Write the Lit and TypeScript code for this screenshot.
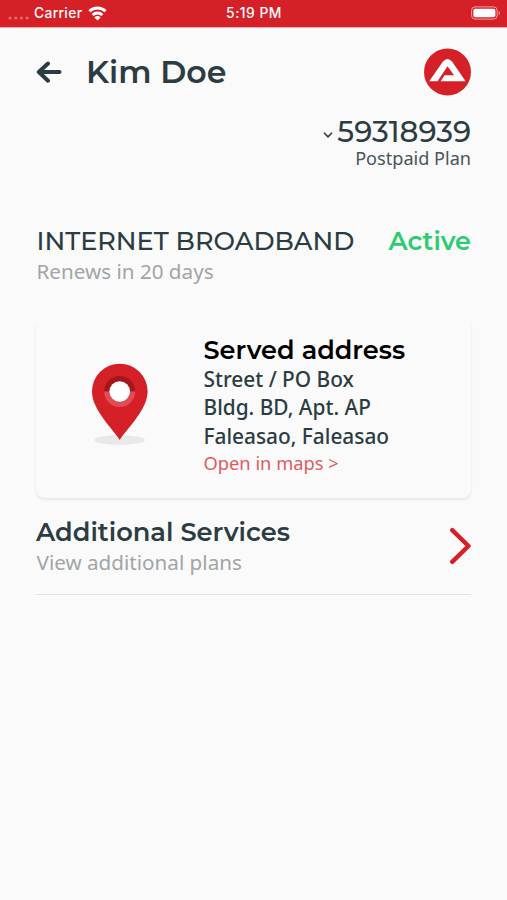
import { LitElement, html, css } from "lit";
import { customElement } from "lit/decorators.js";

@customElement("status-bar")
class StatusBar extends LitElement {
  static styles = css`
    :host { display: block; }
    .bar {
      height: 27px; background: #d62027; color: #fff;
      display: grid; grid-template-columns: 1fr auto 1fr; align-items: center;
      padding: 0 5px 0 8px; border-bottom: 1px solid #ecaaac; box-sizing: content-box;
      font: 500 13.8px/27px Inter, "Liberation Sans", sans-serif;
    }
    .left { display: flex; align-items: center; }
    .dots { margin: 8px 5px 0 0; display: block; }
    .carrier { letter-spacing: 0.35px; }
    .wifi { margin-left: 6px; display: block; }
    .time { letter-spacing: 0.5px; margin-right: 2px; }
    .battery { justify-self: end; display: block; margin-top: -1px; }
  `;
  render() {
    return html`<div class="bar">
      <div class="left">
        <svg class="dots" width="21" height="4" fill="#e4686c">
          <circle cx="2" cy="2" r="1.6" /><circle cx="7.7" cy="2" r="1.6" />
          <circle cx="13.4" cy="2" r="1.6" /><circle cx="19.1" cy="2" r="1.6" />
        </svg>
        <span class="carrier">Carrier</span>
        <svg class="wifi" width="19" height="15" viewBox="0 0 19 15" fill="none" stroke="#fff" stroke-width="2.8">
          <path d="M1.4 5.3a11.6 11.6 0 0 1 16.2 0" />
          <path d="M4.6 9a7 7 0 0 1 9.8 0" />
          <path d="M9.5 14.4 6.4 11.4a4.4 4.4 0 0 1 6.2 0z" fill="#fff" stroke="none" />
        </svg>
      </div>
      <span class="time">5:19 PM</span>
      <svg class="battery" width="31" height="14" viewBox="0 0 31 14">
        <rect x="0.6" y="0.9" width="25.5" height="12.2" rx="3.4" fill="none" stroke="#eda0a3" stroke-width="1" />
        <rect x="2.4" y="2.7" width="22" height="8.6" rx="1.8" fill="#fff" />
        <path d="M27.6 5v4.2q1.6-.6 1.6-2.1t-1.6-2.1z" fill="#e98b8e" />
      </svg>
    </div>`;
  }
}

@customElement("app-root")
class AppRoot extends LitElement {
  static styles = css`
    :host {
      display: block; height: 900px; overflow: hidden; background: #fafafa; color: #2b3d42;
      font-family: "Noto Sans", "Open Sans", sans-serif;
    }
    .page { padding: 0 36px; }
    .display { font-family: Montserrat, Inter, sans-serif; white-space: nowrap; }
    .small { white-space: nowrap; }
    .header { display: flex; align-items: center; height: 88px; }
    .back { display: block; margin-right: 24px; }
    .name { font-size: 31.6px; font-weight: 600; line-height: 36px; }
    .logo { display: block; margin-left: auto; }
    .account { display: flex; flex-direction: column; align-items: flex-end; padding-top: 1px; }
    .number-row { display: flex; align-items: center; height: 30px; gap: 4px; }
    .caret { display: block; margin-top: 5px; }
    .number { font-size: 29.3px; font-weight: 500; line-height: 30px; }
    .plan { font-size: 18.1px; line-height: 23px; color: #46565a; }
    .product { display: flex; justify-content: space-between; margin-top: 55px; height: 32px; padding-left: 0.5px; }
    .product-name { font-size: 25.55px; line-height: 32px; font-weight: 500; }
    .active { font-size: 25.5px; line-height: 32px; font-weight: 600; color: #2ecc71; }
    .muted { font-size: 20.65px; line-height: 28px; color: #a0a5a7; padding-left: 0.5px; }
    .card {
      display: flex; height: 176px; margin-top: 37px; border-radius: 0 0 9px 9px;
      box-shadow: 0 2px 3px rgba(0, 0, 0, 0.08); background: #fafafa;
    }
    .pin { display: block; margin: 40px 0 0 54.5px; }
    .address { margin: 12px 0 0 55px; }
    .served { color: #000; font-size: 25.6px; line-height: 31px; font-weight: 600; }
    .line { font-size: 20.85px; line-height: 28.3px; font-weight: 500; white-space: nowrap; }
    .maps { font-size: 18.3px; line-height: 26px; color: #e05b60; white-space: nowrap; }
    .more { display: flex; justify-content: space-between; margin-top: 18px; height: 78px; border-bottom: 1px solid #e3e3e3; }
    .more-title { font-size: 25.7px; line-height: 32px; font-weight: 600; }
    .chevron { display: block; margin-top: 11px; }
  `;
  render() {
    return html`
      <status-bar></status-bar>
      <main class="page">
        <header class="header">
          <svg class="back" width="26" height="24" viewBox="0 0 26 24" fill="none" stroke="#2b3d42" stroke-width="4" stroke-linecap="round" stroke-linejoin="round">
            <path d="M23.5 12H3.5M12 3.5 2.8 12 12 20.7" />
          </svg>
          <span class="display name">Kim Doe</span>
          <svg class="logo" width="47" height="48" viewBox="0 0 47 48">
            <circle cx="23.5" cy="24" r="23.5" fill="#d62027" />
            <path d="M5.2 33.2 18.8 13.8Q23.5 8.2 28.2 13.8L41.6 33.2z" fill="#fff" />
            <path d="M23.5 18.2 30 27.2H20.5L16.4 33.7H13.2z" fill="#d62027" />
          </svg>
        </header>
        <section class="account">
          <div class="number-row">
            <svg class="caret" width="10" height="8" viewBox="0 0 10 8" fill="none" stroke="#2b3d42" stroke-width="1.6"><path d="m1 1.8 4 4 4-4" /></svg>
            <span class="display number">59318939</span>
          </div>
          <span class="small plan">Postpaid Plan</span>
        </section>
        <section>
          <div class="product">
            <span class="display product-name">INTERNET BROADBAND</span>
            <span class="display active">Active</span>
          </div>
          <div class="small muted">Renews in 20 days</div>
        </section>
        <section class="card">
          <svg class="pin" width="58" height="86" viewBox="0 0 58 86">
            <ellipse cx="28.5" cy="78" rx="25.5" ry="5" fill="#e9e9e9" />
            <path d="M28.7 78C22 67 1 48 1 29.5a27.8 27.8 0 0 1 55.6 0C56.6 48 35.5 67 28.7 78z" fill="#d62027" />
            <path d="M13.2 29.5a15.5 15.5 0 0 1 31 0z" fill="#a3161c" />
            <path d="M13.2 29.5a15.5 15.5 0 0 0 31 0z" fill="#de4d52" />
            <circle cx="28.7" cy="29.5" r="10.3" fill="#fff" />
          </svg>
          <div class="address">
            <div class="display served">Served address</div>
            <div class="line">Street / PO Box</div>
            <div class="line">Bldg. BD, Apt. AP</div>
            <div class="line">Faleasao, Faleasao</div>
            <div class="maps">Open in maps &gt;</div>
          </div>
        </section>
        <section class="more">
          <div>
            <div class="display more-title">Additional Services</div>
            <div class="small muted">View additional plans</div>
          </div>
          <svg class="chevron" width="22" height="38" viewBox="0 0 22 38" fill="none" stroke="#d62027" stroke-width="4.4" stroke-linecap="round" stroke-linejoin="round">
            <path d="M3.2 3.2 19.5 19 3.2 34.8" />
          </svg>
        </section>
      </main>
    `;
  }
}
